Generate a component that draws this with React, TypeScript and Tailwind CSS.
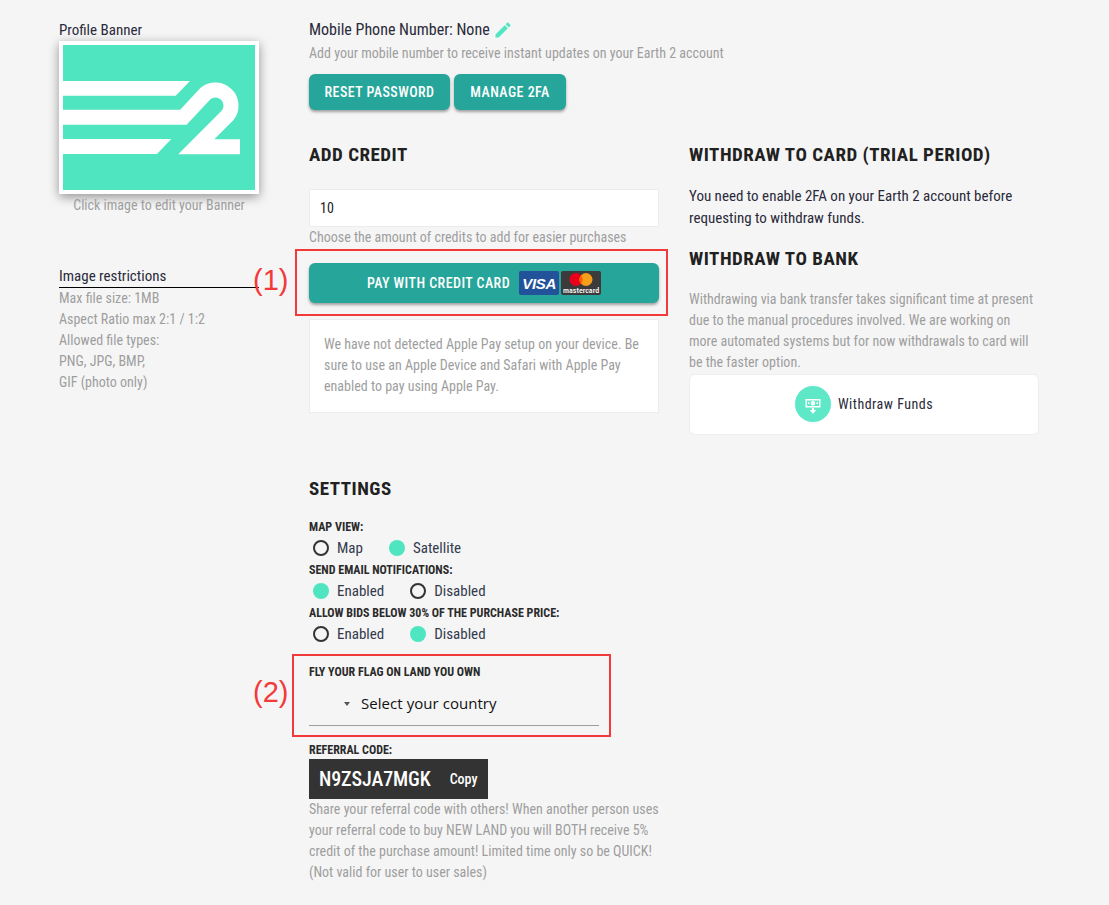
const MINT = "#4fe5c1";

function Heading({ children, className = "" }: { children: string; className?: string }) {
  return <h2 className={`text-[19px] leading-6 font-bold tracking-[0.5px] text-[#212121] ${className}`}>{children}</h2>;
}

function SmallLabel({ children }: { children: string }) {
  return <div className="text-[12px] leading-[14px] font-bold text-[#2b2b2b]">{children}</div>;
}

function Radio({ label, on }: { label: string; on?: boolean }) {
  return (
    <div className="flex items-center gap-2 text-[#333a4d]">
      {on ? (
        <span className="h-4 w-4 rounded-full bg-[#4fe5c1]" />
      ) : (
        <span className="h-4 w-4 rounded-full border-2 border-[#333333]" />
      )}
      <span>{label}</span>
    </div>
  );
}

function RadioRow({ title, options }: { title: string; options: [string, boolean][] }) {
  return (
    <div>
      <SmallLabel>{title}</SmallLabel>
      <div className="mt-[3px] flex h-[22px] gap-[26px] pl-1 text-[15px] leading-[22px]">
        {options.map(([label, on]) => (
          <Radio key={label} label={label} on={on} />
        ))}
      </div>
    </div>
  );
}

function TealButton({ children, className = "" }: { children: React.ReactNode; className?: string }) {
  return (
    <button
      type="button"
      className={`flex items-center justify-center rounded-md bg-[#26a69a] text-[14px] font-medium tracking-[0.45px] text-white shadow-[0_2px_3px_rgba(0,0,0,0.35)] ${className}`}
    >
      {children}
    </button>
  );
}

function CardLogos() {
  return (
    <div className="flex gap-[2px]">
      <div className="flex h-6 w-10 items-center justify-center rounded-[2px] bg-[#22539a] font-['Liberation_Sans',sans-serif] text-[15px] leading-none font-bold tracking-[-0.3px] text-white italic [font-stretch:100%]">
        VISA
      </div>
      <div className="flex h-6 w-10 flex-col items-center rounded-[2px] bg-[#3c3a3a]">
        <svg width="26" height="15" viewBox="0 0 26 15" className="mt-[1px]">
          <circle cx="8" cy="7.5" r="6.5" fill="#eb001b" />
          <circle cx="18" cy="7.5" r="6.5" fill="#f79e1b" />
          <path d="M13 3.4a6.5 6.5 0 0 1 0 8.2a6.5 6.5 0 0 1 0-8.2z" fill="#ff5f00" />
        </svg>
        <span className="text-[8px] leading-[7px] font-medium tracking-normal text-white">mastercard</span>
      </div>
    </div>
  );
}

function Banner() {
  return (
    <div className="h-[153px] w-[200px] border-4 border-white bg-[#4fe5c1] shadow-[0_3px_10px_rgba(0,0,0,0.4)]">
      <svg viewBox="0 0 576 435" className="block h-[145px] w-[192px]">
        <g fill="#fff">
          <polygon points="0,108 381,108 338,152 0,152" />
          <polygon points="0,282 325,282 282,327 0,327" />
        </g>
        <path
          d="M0 217H361L428 145A47 47 0 0 1 494 211L400 305H531"
          fill="none"
          stroke="#fff"
          strokeWidth="45"
        />
      </svg>
    </div>
  );
}

export default function App() {
  return (
    <div className="relative h-[905px] w-[1109px] overflow-hidden bg-[#f5f5f5] font-['Roboto',sans-serif] text-[14px] [font-stretch:75%]">
      <div className="flex pt-[20px] pl-[59px]">
        {/* Left column */}
        <aside className="w-[250px] shrink-0">
          <div className="text-[15px] leading-[21px] text-[#2a2a3a]">Profile Banner</div>
          <Banner />
          <div className="mt-[1px] w-[200px] text-center text-[14px] leading-5 text-[#9e9e9e]">
            Click image to edit your Banner
          </div>
          <div className="mt-[51px] text-[15px] leading-[21px] text-[#2a2a3a]">Image restrictions</div>
          <div className="h-px w-[200px] bg-black" />
          <div className="text-[14px] leading-[21px] text-[#9e9e9e]">
            <div>Max file size: 1MB</div>
            <div>Aspect Ratio max 2:1 / 1:2</div>
            <div>Allowed file types:</div>
            <div>PNG, JPG, BMP,</div>
            <div>GIF (photo only)</div>
          </div>
        </aside>

        {/* Main column */}
        <main className="w-[730px]">
          <div className="flex h-5 items-center gap-[3px] text-[16px] leading-[20px] text-[#2a2a3a]">
            Mobile Phone Number: None
            <svg width="20" height="20" viewBox="0 0 24 24" fill={MINT}>
              <path d="M3 17.25V21h3.75L17.81 9.94l-3.75-3.75L3 17.25zM20.71 7.04a1 1 0 0 0 0-1.41l-2.34-2.34a1 1 0 0 0-1.41 0l-1.83 1.83 3.75 3.75 1.83-1.83z" />
            </svg>
          </div>
          <p className="mt-[3px] text-[14px] leading-5 text-[#9e9e9e]">
            Add your mobile number to receive instant updates on your Earth 2 account
          </p>
          <div className="mt-[11px] flex gap-1">
            <TealButton className="h-9 w-[141px]">RESET PASSWORD</TealButton>
            <TealButton className="h-9 w-[112px]">MANAGE 2FA</TealButton>
          </div>

          <div className="mt-[33px] flex gap-[30px]">
            <section className="w-[350px] shrink-0">
              <Heading>ADD CREDIT</Heading>
              <div className="mt-[22px] flex h-[38px] items-center border border-[#ececec] bg-white px-[10px] text-[14px] text-[#222]">
                10
              </div>
              <p className="text-[14px] leading-5 text-[#9e9e9e]">
                Choose the amount of credits to add for easier purchases
              </p>
              <TealButton className="mt-[16px] h-10 w-full gap-[9px]">
                <span>PAY WITH CREDIT CARD</span>
                <CardLogos />
              </TealButton>
              <div className="mt-4 h-[94px] border border-[#ececec] bg-white px-[14px] pt-[14px] text-[14px] leading-[21px] text-[#9e9e9e]">
                We have not detected Apple Pay setup on your device. Be sure to use an Apple Device and Safari with Apple Pay
                enabled to pay using Apple Pay.
              </div>
            </section>

            <section className="w-[350px] shrink-0">
              <Heading>WITHDRAW TO CARD (TRIAL PERIOD)</Heading>
              <p className="mt-[18px] text-[15px] leading-[22px] text-[#2a2a3a]">
                You need to enable 2FA on your Earth 2 account before requesting to withdraw funds.
              </p>
              <Heading className="mt-[18px]">WITHDRAW TO BANK</Heading>
              <p className="mt-[18px] text-[14px] leading-[21px] text-[#9e9e9e]">
                Withdrawing via bank transfer takes significant time at present due to the manual procedures involved. We are
                working on more automated systems but for now withdrawals to card will be the faster option.
              </p>
              <div className="mt-[1px] flex h-[61px] items-center justify-center gap-[7px] rounded-md border border-[#eeeeee] bg-white pb-px text-[14px] tracking-[0.5px] text-[#2a2a3a]">
                <span className="flex h-9 w-9 items-center justify-center rounded-full bg-[#5fe8c8]">
                  <svg width="20" height="20" viewBox="0 0 20 20" fill="#fff">
                    <path
                      fillRule="evenodd"
                      d="M2.500 5h15v8.500h-15zM4 6.500v5.500h12v-5.500zM10 7a2.200 2.200 0 1 1 0 4.400a2.200 2.200 0 0 1 0-4.400zM5 8.300h1.500v1.800H5zM13.500 8.300H15v1.800h-1.500z"
                    />
                    <path d="M9 14h2v2h2.200L10 20l-3.200-4H9z" />
                  </svg>
                </span>
                Withdraw Funds
              </div>
            </section>
          </div>

          <Heading className="mt-[42px]">SETTINGS</Heading>
          <div className="mt-[19px] flex w-[350px] flex-col gap-[4px]">
            <RadioRow title="MAP VIEW:" options={[["Map", false], ["Satellite", true]]} />
            <RadioRow title="SEND EMAIL NOTIFICATIONS:" options={[["Enabled", true], ["Disabled", false]]} />
            <RadioRow title="ALLOW BIDS BELOW 30% OF THE PURCHASE PRICE:" options={[["Enabled", false], ["Disabled", true]]} />
          </div>

          <div className="mt-[20px]">
            <SmallLabel>FLY YOUR FLAG ON LAND YOU OWN</SmallLabel>
          </div>
          <div className="mt-[6px] flex h-[41px] w-[290px] items-center border-b border-[#9e9e9e] pb-[3px] pl-[35px] font-['Open_Sans',sans-serif] text-[15px] tracking-[0.05px] text-[#111] [font-stretch:100%]">
            <span className="mr-[11px] h-0 w-0 border-x-[3px] border-t-[4px] border-x-transparent border-t-[#555]" />
            Select your country
          </div>

          <div className="mt-[17px]">
            <SmallLabel>REFERRAL CODE:</SmallLabel>
          </div>
          <div className="mt-[2px] flex h-10 w-[179px] items-center bg-[#333333] pl-[10px] text-white">
            <span className="text-[20px] font-medium tracking-[-0.1px]">N9ZSJA7MGK</span>
            <span className="ml-[19px] text-[14px] font-medium">Copy</span>
          </div>
          <p className="w-[350px] text-[14px] leading-[21px] text-[#9e9e9e]">
            Share your referral code with others! When another person uses your referral code to buy NEW LAND you will BOTH
            receive 5% credit of the purchase amount! Limited time only so be QUICK! (Not valid for user to user sales)
          </p>
        </main>
      </div>

      {/* Annotations drawn over the page */}
      <div className="absolute top-[249px] left-[295px] h-[67px] w-[373px] border-2 border-[#f33a3a]" />
      <div className="absolute top-[654px] left-[292px] h-[83px] w-[319px] border-2 border-[#f33a3a]" />
      <div className="absolute top-[262px] left-[253px] font-['Liberation_Sans',sans-serif] text-[29px] leading-9 text-[#f33a3a] [font-stretch:100%]">(1)</div>
      <div className="absolute top-[674px] left-[253px] font-['Liberation_Sans',sans-serif] text-[29px] leading-9 text-[#f33a3a] [font-stretch:100%]">(2)</div>
    </div>
  );
}
